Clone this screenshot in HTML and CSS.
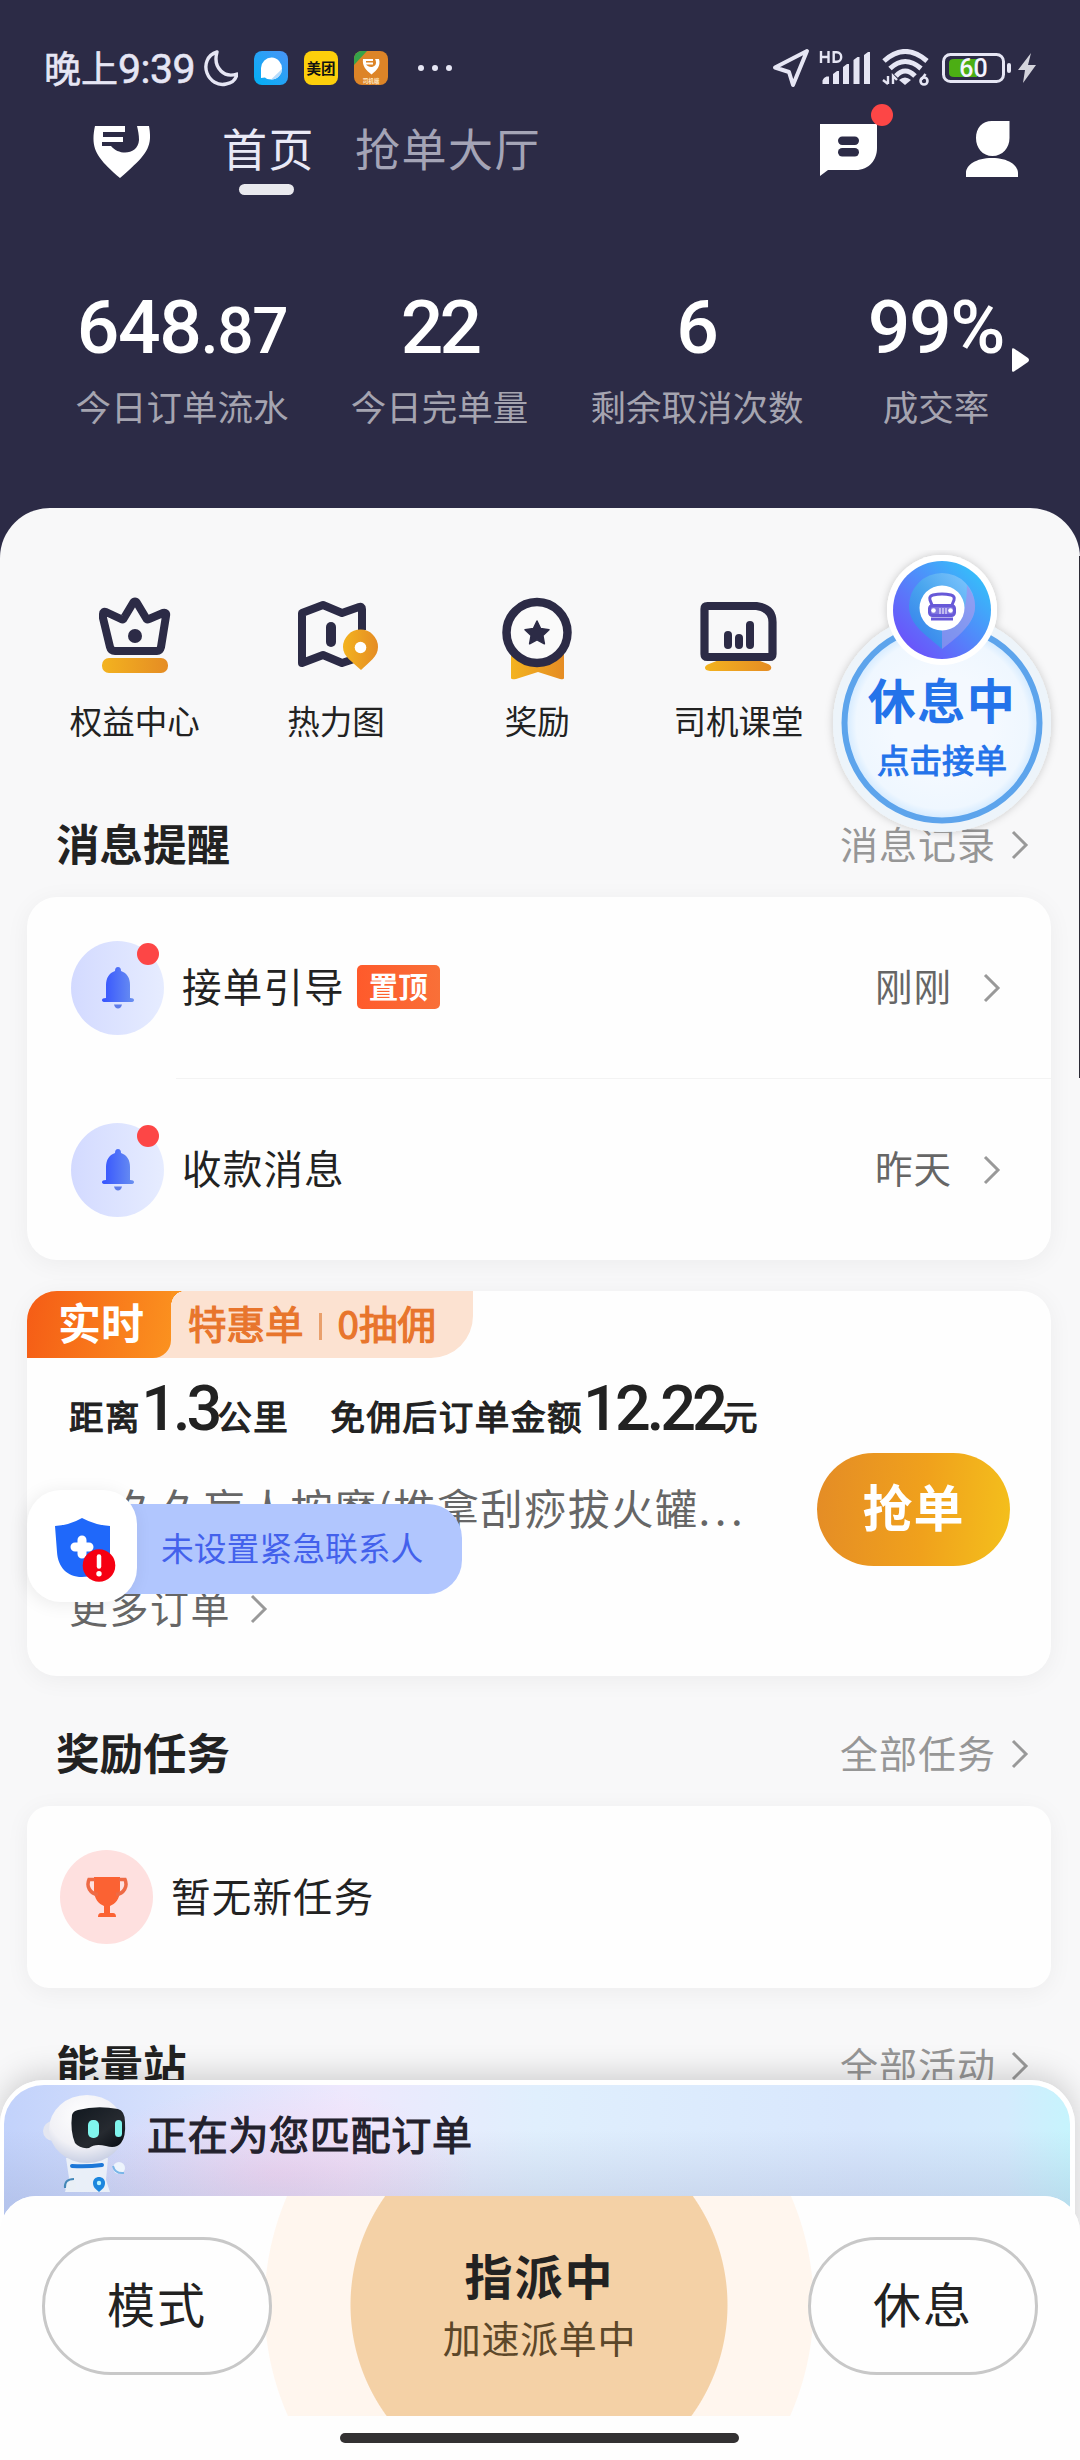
FILE: index.html
```html
<!DOCTYPE html>
<html lang="zh-CN">
<head>
<meta charset="utf-8">
<title>首页</title>
<link rel="stylesheet" href="styles.css">
</head>
<body>
<div class="screen">
  <header class="header">
    <div class="status">
      <span class="clock">晚上<b>9:39</b></span>
      <svg class="moon" width="36" height="38" viewBox="0 0 36 38"><path d="M14 3C4 6 1 16 4 24c3 8 11 13 19 11 6-1 10-5 11-10-6 2-12 1-16-3-5-5-6-12-4-19z" transform="translate(1 0)" fill="none" stroke="#e6e6f4" stroke-width="3.4" stroke-linejoin="round"/></svg>
      <svg class="app" width="34" height="34" viewBox="0 0 34 34"><defs><linearGradient id="ab" x1="0" y1="1" x2="1" y2="0"><stop offset="0" stop-color="#00b0f4"/><stop offset="1" stop-color="#4a94f8"/></linearGradient></defs><rect width="34" height="34" rx="8" fill="url(#ab)"/><path d="M7 27V17a10.500 11 0 1 1 10.500 11.500C14 28.500 12 27.500 11 26.500z" fill="#fff"/><path d="M28 18c0 6-5 10.500-11 10.500z" fill="#b8dcfb"/></svg>
      <span class="app meituan">美团</span>
      <svg class="app" width="34" height="34" viewBox="0 0 34 34"><rect width="34" height="34" rx="8" fill="#dd8427"/><path d="M8 0h5L0 14V8a8 8 0 0 1 8-8z" fill="#35a34a"/><path d="M9 8h10v2h-7v1.500h7v2h-7c3 4 10 3 10-2 0-1.500-.5-2.500-1-3.500h4c2 7-2 11-7.500 15.500C12 19 8 15 9 8z" fill="#fff"/><text x="17" y="32" text-anchor="middle" font-size="5.500" font-weight="700" fill="#ffe9c8" font-family="Noto Sans CJK SC, sans-serif">司机端</text></svg>
      <svg class="more" width="36" height="8" viewBox="0 0 36 8"><g fill="#e6e6f4"><circle cx="4" cy="4" r="3"/><circle cx="18" cy="4" r="3"/><circle cx="32" cy="4" r="3"/></g></svg>
      <svg class="loc" width="38" height="40" viewBox="0 0 38 40"><path d="M35 3L3 19.500l14 4.500 4 13z" fill="none" stroke="#e6e6f4" stroke-width="4" stroke-linejoin="round"/></svg>
      <svg class="signal" width="52" height="36" viewBox="0 0 52 36"><g fill="none" stroke="#e6e6f4" stroke-width="2.400"><path d="M2 1v12M9.500 1v12M2 7h7.500M14.700 2.200h3c6 0 6 9.600 0 9.600h-3z"/></g><g fill="#e6e6f4"><path d="M3.500 30.500q1-3 4-4h2.500V34H3.500zM14 24l4-3h2v13h-6zM24 17l4-3h2v20h-6zM34.500 10l4-3h2v27h-6zM45 5l4-3h2v32h-6z" /></g></svg>
      <svg class="wifi" width="48" height="38" viewBox="0 0 48 38"><g fill="none" stroke="#e6e6f4" stroke-width="5"><path d="M2 12Q23-7 45 12M8 19.500Q23 5.500 39 19.500M14 27Q23 17 33 27"/></g><path d="M17 31q6-5 12 0l-6 5z" fill="#e6e6f4"/><path d="M6 27v8M6 35l-5-4M11 35v-8l4 4" stroke="#e6e6f4" stroke-width="2.400" fill="none"/><path d="M43.500 25l-4 5.500" stroke="#e6e6f4" stroke-width="2.600"/><circle cx="42" cy="32" r="3.500" fill="none" stroke="#e6e6f4" stroke-width="2.600"/></svg>
      <svg class="batt" width="96" height="34" viewBox="0 0 96 34"><rect x="1.500" y="3.500" width="60" height="27" rx="7" fill="none" stroke="#e6e6f4" stroke-width="3"/><path d="M12 8h23v18H12q-5 0-5-4V12q0-4 5-4z" fill="#4cae14"/><rect x="65" y="12" width="4" height="10" rx="2" fill="#e6e6f4"/><text x="31.500" y="25.500" text-anchor="middle" font-family="Roboto, sans-serif" font-weight="500" font-size="25" fill="#f4f4ff">60</text><path d="M89 2L76 19h7l-2 13 13-18h-8l3-12z" fill="#d4d4dc"/></svg>
    </div>
    <nav class="nav">
      <svg class="brand" width="60" height="54" viewBox="0 0 60 54"><path d="M3 2h30v6H11v5h20v5H10v4h9c8 10 27 9 28-6 0-5-1-10-2-14h12c4 22-3 29-29 52C5 34-2 25 3 2z" fill="#fff"/></svg>
      <a class="tab active">首页</a>
      <a class="tab">抢单大厅</a>
      <span class="msg"><svg width="58" height="52" viewBox="0 0 58 52"><path d="M0 0h57v24c0 12-8 22-21 22H8l-8 6z" fill="#fff"/><rect x="18" y="12.500" width="21" height="8.500" rx="4.200" fill="#2c2b46"/><rect x="18" y="24" width="21" height="8.500" rx="4.200" fill="#2c2b46"/></svg><i class="dot"></i></span>
      <svg class="me" width="52" height="56" viewBox="0 0 52 56"><path d="M26 0h17.500v17c0 10-7 18-17 18S10 27 10 17 16 0 26 0zM0 56V52c0-8 10-15 26-15s26 7 26 15v4z" fill="#fff"/></svg>
    </nav>
    <section class="stats">
      <div><strong>648<small>.87</small></strong><span>今日订单流水</span></div>
      <div><strong class="tight">22</strong><span>今日完单量</span></div>
      <div><strong>6</strong><span>剩余取消次数</span></div>
      <div><strong>99%</strong><span>成交率</span></div>
      <svg class="play" width="20" height="26" viewBox="0 0 20 26"><path d="M2 2.500q0-2 2-1L18 11q2 2 0 4L4 24.500q-2 1-2-1z" fill="#fff"/></svg>
    </section>
  </header>

  <main class="sheet">
    <div class="quick">
      <a><svg width="90" height="90" viewBox="0 0 90 90"><defs><linearGradient id="o1" x1="0" x2="1"><stop offset="0" stop-color="#f3b31f"/><stop offset="1" stop-color="#e58c24"/></linearGradient></defs><path d="M13 22q0-3 3-2l15 7q2 1 3-1l9-15q2-3 4 0l9 15q1 2 3 1l14-6q4-1 3 3l-5 31q-1 4-4 4H25q-4 0-5-4L13 26z" fill="none" stroke="#2c2b46" stroke-width="8" stroke-linejoin="round"/><circle cx="45" cy="44" r="7" fill="#2c2b46"/><rect x="12" y="66" width="66" height="15" rx="7" fill="url(#o1)"/></svg><span>权益中心</span></a>
      <a><svg width="90" height="90" viewBox="0 0 90 90"><path d="M71 38V17q0-3-3-2L51 21 32 13 11 21v50l21-8 19 8 12-4" fill="none" stroke="#2c2b46" stroke-width="8" stroke-linejoin="round"/><rect x="35" y="30" width="10" height="25" rx="5" fill="#2c2b46"/><path d="M70 78C62 70 52 65 52 55a17.500 17.500 0 0 1 35 0c0 10-9 15-17 23z" fill="url(#o1)"/><circle cx="69.500" cy="55.500" r="5.800" fill="#fff"/></svg><span>热力图</span></a>
      <a><svg width="90" height="90" viewBox="0 0 90 90"><path d="M19 60h53v26q0 2-4 1L46 80l-22 7q-5 1-5-1z" fill="url(#o1)"/><circle cx="45" cy="40.500" r="30.500" fill="#fafafa" stroke="#2c2b46" stroke-width="8.500"/><path d="M45 29l3.600 7.600 8.400 1.100-6.100 5.800 1.500 8.300-7.400-4-7.400 4 1.500-8.300-6.100-5.800 8.400-1.100z" fill="#2c2b46" stroke="#2c2b46" stroke-width="1.500" stroke-linejoin="round"/></svg><span>奖励</span></a>
      <a><svg width="90" height="90" viewBox="0 0 90 90"><path d="M30 66h28l16 6c5 2 4 7-1 7H16c-6 0-7-5-1-7z" fill="url(#o1)"/><path d="M13 14h49q16 2 16 16v32q0 3-3 3H13q-3 0-3-3V17q0-3 3-3z" fill="none" stroke="#2c2b46" stroke-width="8.200" transform="translate(.5 0)"/><path d="M34 43v10M45 46v7M56 33v20" stroke="#2c2b46" stroke-width="8" stroke-linecap="round"/></svg><span>司机课堂</span></a>
    </div>

    <div class="head first"><h2>消息提醒</h2><a>消息记录<svg class="chev" width="18" height="30" viewBox="0 0 18 30"><path d="M2 2l13 13L2 28" /></svg></a></div>
    <section class="card">
      <div class="row">
        <span class="bell"><svg width="34" height="42" viewBox="0 0 34 42"><defs><linearGradient id="bl" x1="0" x2="1"><stop offset="0" stop-color="#3553ff"/><stop offset="1" stop-color="#6a90f0"/></linearGradient></defs><path d="M17 0q3 0 3 4c6 2 9 7 9 14v13q4 0 4 2 0 2-3 2H4q-3 0-3-2 0-2 4-2V18C5 11 8 6 14 4q0-4 3-4z" fill="url(#bl)"/><path d="M13 37.500h8q-1 4-4 4t-4-4z" fill="#5f7ce8"/></svg><i class="dot"></i></span>
        <span class="title">接单引导</span><em class="tag">置顶</em>
        <span class="time">刚刚</span><svg class="chev" width="18" height="30" viewBox="0 0 18 30"><path d="M2 2l13 13L2 28"/></svg>
      </div>
      <hr>
      <div class="row">
        <span class="bell"><svg width="34" height="42" viewBox="0 0 34 42"><path d="M17 0q3 0 3 4c6 2 9 7 9 14v13q4 0 4 2 0 2-3 2H4q-3 0-3-2 0-2 4-2V18C5 11 8 6 14 4q0-4 3-4z" fill="url(#bl)"/><path d="M13 37.500h8q-1 4-4 4t-4-4z" fill="#5f7ce8"/></svg><i class="dot"></i></span>
        <span class="title">收款消息</span>
        <span class="time">昨天</span><svg class="chev" width="18" height="30" viewBox="0 0 18 30"><path d="M2 2l13 13L2 28"/></svg>
      </div>
    </section>

    <section class="card order">
      <div class="ribbon"><span class="live">实时</span><span class="deal">特惠单<i></i>0抽佣</span></div>
      <div class="facts"><span>距离</span><b class="n1">1.3</b><span>公里</span><span class="gap">免佣后订单金额</span><b class="n2">12.22</b><span>元</span></div>
      <div class="place"><p>久久盲人按摩(推拿刮痧拔火罐<span>...</span></p><button class="grab">抢单</button></div>
      <a class="all">更多订单<svg class="chev" width="18" height="30" viewBox="0 0 18 30"><path d="M2 2l13 13L2 28"/></svg></a>
    </section>

    <div class="head"><h2>奖励任务</h2><a>全部任务<svg class="chev" width="18" height="30" viewBox="0 0 18 30"><path d="M2 2l13 13L2 28"/></svg></a></div>
    <section class="card task">
      <span class="cup"><svg width="44" height="44" viewBox="0 0 44 44"><path d="M9 2h26v13c0 9-5 14-10 16v7h3q3 0 3 4H13q0-4 3-4h3v-7c-5-2-10-7-10-16z" fill="#fb6233"/><path d="M10 4.500H4c-3 7 1 14 9 15M34 4.500h6c3 7-1 14-9 15" fill="none" stroke="#ee6a45" stroke-width="3.500"/></svg></span>
      <span class="title">暂无新任务</span>
    </section>

    <div class="head"><h2>能量站</h2><a>全部活动<svg class="chev" width="18" height="30" viewBox="0 0 18 30"><path d="M2 2l13 13L2 28"/></svg></a></div>
  </main>
  <i class="edge"></i>

  <aside class="resting">
    <svg width="240" height="300" viewBox="0 0 240 300">
      <defs>
        <radialGradient id="rg"><stop offset=".5" stop-color="#f4f9ff"/><stop offset=".88" stop-color="#eff7ff"/><stop offset="1" stop-color="#cfe8ff"/></radialGradient>
        <linearGradient id="pg" x1="0" y1="1" x2="1" y2="0"><stop offset="0" stop-color="#7242fa"/><stop offset=".4" stop-color="#5a78fa"/><stop offset="1" stop-color="#2cd0fa"/></linearGradient>
        <linearGradient id="pn" x1="0" y1="1" x2="1" y2="0"><stop offset="0" stop-color="#3277ec"/><stop offset=".5" stop-color="#49a5ee"/><stop offset="1" stop-color="#86caff"/></linearGradient>
        <filter id="sh" x="-20%" y="-20%" width="140%" height="140%"><feDropShadow dx="0" dy="0" stdDeviation="4" flood-color="#000" flood-opacity=".2"/></filter>
      </defs>
      <g filter="url(#sh)"><circle cx="120" cy="173" r="109" fill="#edf4fa"/><circle cx="120" cy="60" r="55" fill="#fff"/></g>
      <circle cx="120" cy="173" r="109" fill="#edf4fa"/>
      <circle cx="120" cy="173" r="97.500" fill="url(#rg)" stroke="#5da4ec" stroke-width="6"/>
      <circle cx="120" cy="60" r="55" fill="#fff"/><circle cx="120" cy="60" r="49" fill="url(#pg)"/>
      <path d="M120 99C106 86 87 76 87 56a33 33 0 0 1 66 0c0 20-19 30-33 43z" fill="url(#pn)"/>
      <path d="M120 99V80c14 0 25-12 25-45 17 23 7 41-25 64z" fill="#a08df0" opacity=".65"/>
      <circle cx="120" cy="58" r="22.500" fill="#fff"/>
      <g fill="none" stroke="#6759d8" stroke-width="3"><path d="M110 55l-2-5q-1-4 3-5 9-2 18 0 4 1 3 5l-2 5"/><rect x="107.500" y="55.500" width="25" height="10" rx="3" fill="#8175df"/><path d="M109 69h22"/></g><g fill="#fff"><circle cx="111.500" cy="60.500" r="2.300"/><circle cx="128.500" cy="60.500" r="2.300"/></g><path d="M118 58v6M121 58v6M124 58v6" stroke="#fff" stroke-width="1"/>
    </svg>
    <strong>休息中</strong><span>点击接单</span>
  </aside>

  <aside class="safety">
    <span class="shield"><svg width="64" height="68" viewBox="0 0 64 68"><path d="M0 8q15-1 27-8 13 7 28 8v26c0 14-12 25-28 25C12 59 3 49 2 34z" fill="#1f68fa"/><path d="M27 22v14M20 29h14" stroke="#fff" stroke-width="9" stroke-linecap="round"/><circle cx="44" cy="47.500" r="16.300" fill="#f60012"/><path d="M44 38.500v10" stroke="#fff" stroke-width="4.500" stroke-linecap="round"/><circle cx="44" cy="55.800" r="2.700" fill="#fff"/></svg></span>
    <span class="warn">未设置紧急联系人</span>
  </aside>

  <footer class="dock">
    <div class="matching">
      <svg class="robot" width="88" height="100" viewBox="0 0 88 100">
        <defs><radialGradient id="hd" cx=".45" cy=".3" r=".7"><stop offset="0" stop-color="#fff"/><stop offset=".65" stop-color="#f1f1f6"/><stop offset="1" stop-color="#c9d0e4"/></radialGradient><linearGradient id="vs" x1="0" y1="0" x2="1" y2="1"><stop offset="0" stop-color="#11181f"/><stop offset=".6" stop-color="#262a30"/><stop offset="1" stop-color="#050a10"/></linearGradient></defs>
        <path d="M24 64h42l-2 22 4 12H23l4-14z" fill="#e9eff8"/>
        <circle cx="11" cy="37" r="10" fill="#e4e6f0"/><path d="M10 31q7 6 0 13" fill="none" stroke="#fff" stroke-width="3"/>
        <ellipse cx="45" cy="35" rx="38" ry="34" fill="url(#hd)"/>
        <path d="M30 21q1-4 6-5 19-5 40-1 7 2 7 13 1 15-4 21-5 6-15 3-11-3-17 2-9 1-14-5-5-12-3-28z" fill="url(#vs)"/>
        <rect x="46" y="26" width="11" height="18" rx="5" fill="#80f5ed"/><rect x="73" y="26" width="7" height="17" rx="3.500" fill="#80f5ed"/>
        <path d="M30 72q15 1 30-1" stroke="#1c77d8" stroke-width="4" fill="none" stroke-linecap="round"/>
        <circle cx="77" cy="74" r="6" fill="#edf4fc"/><path d="M71 72q2 8 11 7" stroke="#7ab6e8" stroke-width="2" fill="none"/>
        <circle cx="28" cy="91" r="6" fill="#e9eff6"/><path d="M23 94q-1-9 9-9" stroke="#4487b8" stroke-width="2" fill="none"/>
        <path d="M57 98c-5-4-6-6-6-9 0-8 12-8 12 0 0 3-1 5-6 9z" fill="#1c86de"/><circle cx="57" cy="89" r="2.200" fill="#b8f4ff"/>
      </svg>
      <span>正在为您匹配订单</span>
    </div>
    <div class="panel">
      <div class="actions">
        <button class="pill">模式</button>
        <div class="assign"><strong>指派中</strong><span>加速派单中</span></div>
        <button class="pill">休息</button>
      </div>
      <i class="homebar"></i>
    </div>
  </footer>
</div>
</body>
</html>
```
FILE: styles.css
```css
* { box-sizing: border-box; margin: 0; padding: 0; }
body { width: 1080px; height: 2460px; overflow: hidden; background: #2c2b46; color: #222; font-family: "Noto Sans CJK SC", sans-serif; }
button { font: inherit; color: inherit; border: 0; background: none; }
i, em { font-style: normal; }
svg { display: block; flex: none; }

.screen { position: relative; width: 1080px; height: 2460px; overflow: hidden; display: flex; flex-direction: column; }
.header { flex: none; height: 508px; background: #2c2b46; }

/* status bar */
.status { height: 110px; padding: 26px 42px 0 44px; display: flex; align-items: center; color: #e6e6f4; }
.clock { width: 158px; display: flex; align-items: center; font-size: 37px; line-height: 44px; white-space: nowrap; margin-top: -3px; -webkit-text-stroke: .6px currentColor; }
.clock b { font: 400 41px/44px Roboto, sans-serif; letter-spacing: -.5px; margin-top: 4px; }
.moon { margin-right: 16px; }
.app { margin-right: 16px; }
.meituan { width: 34px; height: 34px; border-radius: 8px; background: #fdcf0b; color: #111; font-size: 14.5px; line-height: 33px; font-weight: 700; text-align: center; }
.more { margin-left: 13px; }
.loc { margin-left: auto; }
.signal { margin-left: 9px; }
.wifi { margin-left: 11px; }
.batt { margin-left: 12px; }

/* top navigation */
.nav { height: 78px; display: flex; align-items: center; padding: 0 62px 0 92px; }
.brand { margin-right: 70px; margin-top: 4px; }
.tab { position: relative; font-size: 45px; line-height: 60px; letter-spacing: 1.5px; color: #a4a4b6; margin: -3px 40px 0 0; }
.tab.active { color: #e9e9f6; }
.tab.active::after { content: ""; position: absolute; left: 17px; top: 66px; width: 55px; height: 11px; border-radius: 6px; background: #e9e9ee; }
.msg { position: relative; margin-left: auto; margin-top: 2px; }
.dot { position: absolute; width: 22px; height: 22px; border-radius: 50%; background: #fd4646; }
.msg .dot { left: 51px; top: -20px; }
.me { margin-left: 88px; }

/* daily figures */
.stats { position: relative; padding: 99px 0 0 53px; display: grid; grid-template-columns: 258px 257px 258px 220px; text-align: center; }
.stats strong { display: block; height: 80px; font: 500 75px/80px Roboto, sans-serif; letter-spacing: -1.3px; color: #fff; white-space: nowrap; }
.stats .tight { letter-spacing: -4px; }
.stats small { font-size: 64px; line-height: 1; }
.stats span { display: block; margin-top: 14px; font-size: 35.5px; line-height: 50px; color: #a5a4b0; }
.play { position: absolute; left: 1010px; top: 159px; }

/* content sheet */
.sheet { flex: none; height: 1952px; background: #f8f8f9; border-radius: 50px 50px 0 0; }
.edge { position: absolute; left: 1079px; top: 556px; width: 1px; height: 522px; background: #2c2b36; }
.quick { padding: 84px 0 0 34px; display: grid; grid-template-columns: repeat(4, 201.3px); }
.quick a { display: flex; flex-direction: column; align-items: center; gap: 18px; }
.quick span { font-size: 32.5px; line-height: 40px; }
.head { height: 60px; margin: 46px 51px 24px 56px; display: flex; align-items: center; justify-content: space-between; }
.head.first { margin-top: 73px; }
.head h2 { font-size: 43.5px; line-height: 60px; font-weight: 700; }
.head a { display: flex; align-items: center; font-size: 38px; line-height: 60px; letter-spacing: 1px; color: #969696; }
.head .chev { margin-left: 15px; margin-top: 3px; }
.chev path { fill: none; stroke: #999; stroke-width: 3; }

.card { margin: 0 29px 31px 27px; border-radius: 30px; background: #fefefe; box-shadow: 0 4px 24px rgba(0,0,0,.05); }
.row { height: 181px; display: flex; align-items: center; padding: 0 50px 0 44px; }
.card hr { border: 0; height: 1px; margin-left: 149px; background: #f3f3f3; }
.bell, .cup { position: relative; width: 93px; height: 94px; border-radius: 50%; display: flex; align-items: center; justify-content: center; background: linear-gradient(90deg, #d3daff, #e6ecff); }
.bell .dot { left: 66px; top: 2px; }
.title { font-size: 39.5px; line-height: 60px; letter-spacing: 1.2px; margin-left: 18px; margin-top: -5px; }
.tag { width: 83px; height: 44px; margin-left: 12px; margin-top: -1px; border-radius: 5px; background: linear-gradient(90deg, #ff5a2b, #f97038); color: #fff; font-size: 29.5px; line-height: 40px; font-weight: 700; text-align: center; }
.time { margin: -6px 31px 0 auto; font-size: 37.5px; line-height: 60px; letter-spacing: 1px; color: #666; }

/* live order */
.order { height: 385px; margin-bottom: 0; overflow: hidden; }
.ribbon { height: 67px; width: 446px; display: flex; background: #fce2d1; border-radius: 0 0 42px 0; }
.live { position: relative; width: 144px; padding-left: 31px; border-radius: 0 0 18px 0; background: linear-gradient(100deg, #f55c16, #fb921f); color: #fff; font-size: 43px; line-height: 60px; font-weight: 700; }
.live::after { content: ""; position: absolute; left: 144px; top: 0; width: 13px; height: 15px; background: radial-gradient(ellipse 13px 15px at 100% 100%, transparent 98%, #fb921f 100%); }
.deal { display: flex; align-items: center; padding-left: 17px; color: #e8752c; font-size: 38.5px; line-height: 60px; margin-top: -5px; -webkit-text-stroke: 1.2px currentColor; }
.deal i { width: 3px; height: 27px; margin: 8px 16px 0 15px; background: #e9a06c; }
.facts { height: 60px; margin: 21px 0 0 42px; display: flex; align-items: baseline; font-size: 34.5px; line-height: 60px; letter-spacing: 1.6px; white-space: nowrap; -webkit-text-stroke: 1.2px currentColor; }
.facts b { font: 500 63px/60px Roboto, sans-serif; -webkit-text-stroke: 0; }
.facts .n1 { width: 76px; letter-spacing: -4px; }
.facts .n2 { width: 140px; letter-spacing: -4px; }
.facts .gap { margin-left: 41px; }
.place { display: flex; align-items: center; height: 113px; margin: 14px 41px 0 89px; }
.place p { flex: 1; font-size: 42px; line-height: 60px; letter-spacing: 1.6px; color: #666; white-space: nowrap; margin-top: -5px; }
.place p span { letter-spacing: 4.5px; }
.grab { width: 193px; height: 113px; padding-bottom: 9px; border-radius: 57px; background: linear-gradient(95deg, #e48c26, #f0a11c 55%, #f4c01c); color: #fff; font-size: 50px; line-height: 100px; font-weight: 700; letter-spacing: 1px; }
.all { display: flex; align-items: center; margin: 10px 0 0 42px; font-size: 39px; line-height: 60px; letter-spacing: 1.5px; color: #666; }
.all .chev { margin-left: 19px; margin-top: 6px; }

.task { height: 182px; margin-bottom: 0; padding-left: 33px; border-radius: 22px; display: flex; align-items: center; }
.cup { background: #fee0df; }

/* floating status badge */
.resting { position: absolute; left: 822px; top: 550px; width: 240px; height: 300px; text-align: center; color: #2473ea; }
.resting svg { position: absolute; left: 0; top: 0; }
.resting strong { position: relative; display: block; margin-top: 115px; font-size: 48px; line-height: 66px; font-weight: 700; letter-spacing: 1.5px; }
.resting span { position: relative; display: block; margin-top: 3px; font-size: 32.5px; line-height: 50px; -webkit-text-stroke: 1px currentColor; }

/* safety reminder */
.safety { position: absolute; left: 27px; top: 1490px; display: flex; align-items: center; }
.shield { position: relative; z-index: 1; width: 110px; height: 112px; border-radius: 34px; background: #fff; padding: 28px 0 0 28px; box-shadow: -2px 2px 18px rgba(0,0,0,.08); }
.warn { height: 90px; width: 355px; margin-left: -30px; margin-top: 6px; padding-left: 54px; border-radius: 0 34px 34px 0; background: #b1c6fe; color: #4361ec; font-size: 32.8px; line-height: 86px; white-space: nowrap; }

/* bottom dock */
.dock { position: absolute; left: 0; bottom: 0; width: 1080px; height: 380px; }
.matching { width: 1075px; height: 170px; display: flex; align-items: flex-start; border: 5px solid #fff; border-bottom: 0; border-left-width: 4px; border-radius: 44px 44px 0 0; padding: 9px 0 0 38px; box-shadow: 0 -6px 30px rgba(0,0,0,.17);
  background: linear-gradient(180deg, transparent 45px, rgba(130,140,180,.2) 115px), radial-gradient(ellipse 200px 90px at 270px 90px, rgba(250,205,235,.55), transparent), linear-gradient(90deg, #c2d2fb, #dae3fd 18%, #eee8fd 32%, #e0effd 50%, #d8e7fd 80%, #d4ebfd 94%, #c6f4fd); }
.matching span { margin: 9px 0 0 17px; font-size: 40px; line-height: 60px; letter-spacing: .7px; color: #23212d; -webkit-text-stroke: 1.2px currentColor; }
.panel { position: absolute; left: 0; bottom: 0; width: 1080px; height: 264px; background: #fefefe; border-radius: 36px 36px 0 0; overflow: hidden; }
.actions { position: relative; height: 220px; padding: 0 42px; display: flex; justify-content: space-between; overflow: hidden; background: radial-gradient(circle at 539px 109px, #f4d1a6 188px, #fff6ee 189px, #fff6ee 274px, #fefefe 275px); }
.pill { width: 230px; height: 138px; margin-top: 41px; padding-bottom: 9px; border: 3px solid #c8c8c8; border-radius: 69px; background: #fefefe; font-size: 48px; line-height: 120px; letter-spacing: 2px; }
.assign { text-align: center; padding-top: 45px; margin-left: -1px; }
.assign strong { display: block; font-size: 48px; line-height: 66px; letter-spacing: 2px; }
.assign span { display: block; margin-top: 3px; font-size: 38px; line-height: 54px; letter-spacing: .7px; color: #5c4729; }
.homebar { display: block; width: 399px; height: 10px; margin: 17px 0 0 340px; border-radius: 5px; background: #333132; }
```
